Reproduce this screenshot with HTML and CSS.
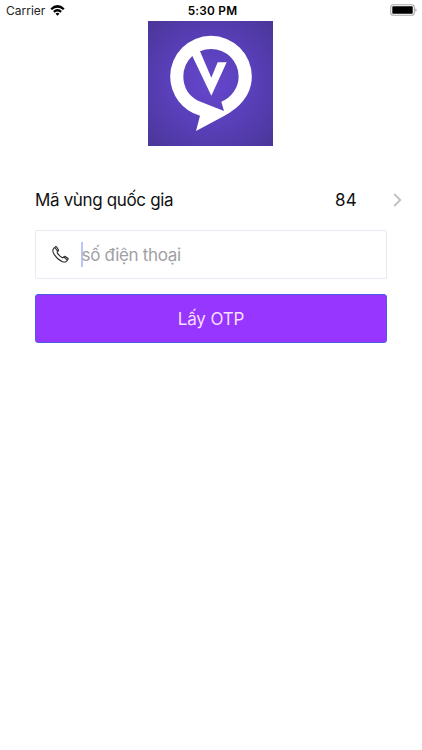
FILE: index.html
```
<!DOCTYPE html>
<html lang="vi">
<head>
<meta charset="utf-8">
<title>OTP</title>
<link rel="stylesheet" href="styles.css">
</head>
<body>
<header class="status">
  <div class="carrier"><span>Carrier</span>
    <svg class="wifi" viewBox="0 0 42 30"><path d="M1 9.500Q21-9 41 9.500L36.500 14Q21 1 5.500 14Z M8.500 17Q21 6 33.500 17L29 21.500Q21 14.500 13 21.500Z M15.500 24.500Q21 19.500 26.500 24.500L21 30Z"/></svg>
  </div>
  <div class="time">5:30 PM</div>
  <svg class="battery" viewBox="0 0 27 12"><rect x=".7" y=".7" width="23.600" height="10.600" rx="2.800" fill="#fff" stroke="#aaa" stroke-width="1.100"/><rect x="2.300" y="2.300" width="20.400" height="7.400" rx=".8"/><path d="M25.300 4.200Q26.700 5 26.700 6T25.300 7.800Z" fill="#aaa"/></svg>
</header>
<main>
  <svg class="logo" viewBox="24 62 375 375">
    <defs><radialGradient id="bg" r=".7"><stop offset="0" stop-color="#6547cc"/><stop offset=".5" stop-color="#593fb9"/><stop offset="1" stop-color="#4a3699"/></radialGradient></defs>
    <rect x="24" y="62" width="375" height="375" fill="url(#bg)"/>
    <path fill="#fff" fill-rule="evenodd" d="M180 346A122.500 122.500 0 0 1 90.500 229A122.500 122.500 0 0 1 213 106.500A122.500 122.500 0 0 1 335.500 229Q335 283 288 323Q270 338 248 349L168 392Z M157 167A83 83 0 0 0 130 229Q131 278 174 301L252 332L244 304A83 83 0 0 0 296 229A83 83 0 0 0 213 146Q196 146 180 153L214 232L233 186H260L214 286Z"/>
  </svg>
  <div class="region"><span>Mã vùng quốc gia</span><span class="code">84</span>
    <svg class="chevron" viewBox="0 0 9 14"><path d="M1.200 1L7.300 7L1.200 13"/></svg>
  </div>
  <div class="field">
    <svg class="phone" viewBox="0 0 17 17"><path d="M1.700 2.300L3.500.8Q4.200.4 4.800 1.200L6.400 3.700Q6.800 4.400 6.200 5L5.200 5.900Q5 6.400 5.600 7.400Q7.400 10 10 11.500Q10.700 11.900 11.200 11.300L12 10.500Q12.500 10 13.200 10.500L15.800 12.200Q16.500 12.800 15.900 13.500L14.400 15.300Q13 16.700 10 15.400Q4 12.600 1.300 6.700Q.2 4 1.700 2.300ZM2.800 1.500L5.900 5.300M11.700 10.900L15.300 14.200"/></svg>
    <span class="caret"></span><span class="placeholder">số điện thoại</span>
  </div>
  <button class="submit">Lấy OTP</button>
</main>
</body>
</html>
```
FILE: styles.css
```
* { box-sizing: border-box; }
body { margin: 0; height: 750px; background: #fff; color: #111; font-family: Inter, "Noto Sans", sans-serif; overflow: hidden; }
.status { display: grid; grid-template-columns: 1fr auto 1fr; align-items: center; height: 20.700px; padding: 0 5px 0 6px; font-size: 12px; color: #222; }
.carrier { display: flex; align-items: center; gap: 5px; }
.wifi { width: 15px; height: 10.700px; fill: #000; }
.time { font-size: 11.800px; font-weight: 600; letter-spacing: .25px; color: #000; padding: 2px 0 0 2px; }
.battery { width: 27px; height: 12px; justify-self: end; }
.logo { display: block; width: 125px; height: 125px; margin: 0 0 0 148.300px; }
.region { display: flex; align-items: center; height: 47px; margin-top: 31.300px; padding: 0 20px 0 35px; font-size: 17px; letter-spacing: -.35px; }
.code { margin-left: auto; letter-spacing: .2px; }
.chevron { width: 9px; height: 14px; margin-left: 36px; fill: none; stroke: #c2c2c6; stroke-width: 1.900; }
.field { display: flex; align-items: center; width: 352px; height: 49px; margin: 6.300px 0 0 35px; padding-left: 16px; border: 1.500px solid #e8e9f1; border-radius: 2px; }
.phone { width: 17px; height: 17px; fill: none; stroke: #222; stroke-width: 1.050; stroke-linejoin: round; }
.caret { width: 2px; height: 25px; margin: 0 -1.500px 0 12px; background: #b9c5f7; }
.placeholder { font-size: 17px; color: #a0a0a4; letter-spacing: -.32px; }
.submit { display: block; width: 352px; height: 49px; margin: 15px 0 0 35px; padding: 1px 0 0; border: 1px solid #4b5de5; border-radius: 3px; background: #9636ff; color: #f8dfff; font: 17px Inter, "Noto Sans", sans-serif; letter-spacing: -.15px; }
```
